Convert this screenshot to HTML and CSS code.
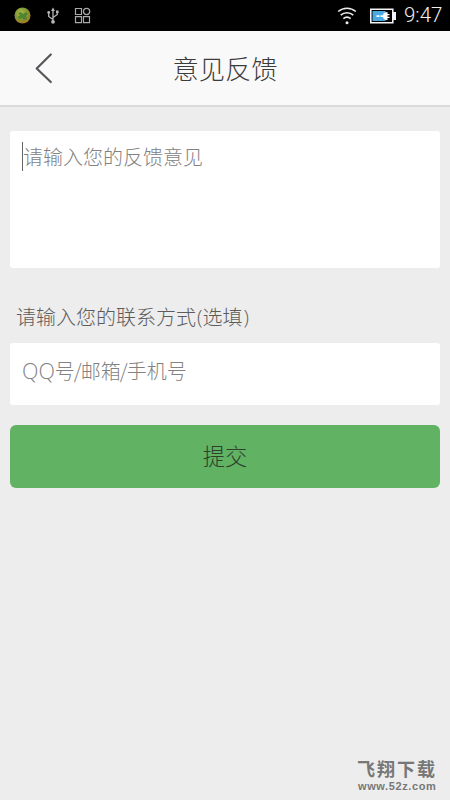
FILE: index.html
```html
<!DOCTYPE html>
<html lang="zh-CN">
<head>
<meta charset="utf-8">
<title>意见反馈</title>
<link rel="stylesheet" href="styles.css">
</head>
<body>
<div class="screen">
  <div class="status">
    <svg class="status-left" width="110" height="31" viewBox="0 0 110 31">
      <defs>
        <radialGradient id="orb" cx="40%" cy="35%" r="65%">
          <stop offset="0" stop-color="#b5bd45"/>
          <stop offset=".55" stop-color="#7f9a35"/>
          <stop offset="1" stop-color="#a47a24"/>
        </radialGradient>
      </defs>
      <circle cx="22.500" cy="15.500" r="8" fill="url(#orb)"/>
      <path d="M18 13l3-1 2 2 3-2 2 2-2 2 1 3-3 1-2-2-3 1-1-2 2-2z" fill="#4f8530"/>
      <g fill="none" stroke="#b4b4b4" stroke-width="1.300">
        <path d="M53 10v11M53 19.500l-4.300-3v-3.500M53 17.500l4.300-3v-2"/>
      </g>
      <g fill="#b4b4b4">
        <path d="M53 7.500l2 3.500h-4z"/>
        <circle cx="53" cy="21.800" r="1.900"/>
        <circle cx="48.700" cy="12.500" r="1.400"/>
        <path d="M56 10.500h2.600v2.600H56z"/>
      </g>
      <g fill="none" stroke="#a8a8a8" stroke-width="1.200">
        <path d="M75.500 8.500h6v6h-6zM75.500 16.700h6v6h-6zM83.500 16.700h6v6h-6z"/>
        <circle cx="86.600" cy="11.500" r="3.100"/>
      </g>
    </svg>
    <div class="status-right">
      <svg width="62" height="31" viewBox="0 0 62 31">
        <g fill="none" stroke="#ececec" stroke-width="1.600">
          <path d="M1.200 11.500c5-4.400 12.600-4.400 17.600 0M3.700 15.200c3.600-3.200 9-3.200 12.600 0M6.400 18.600c2.200-1.900 5-1.900 7.200 0"/>
        </g>
        <circle cx="10" cy="22.800" r="1.500" fill="#ececec"/>
        <path d="M33.800 9.300h22v13.400h-22z" fill="#000" stroke="#f4f4f4" stroke-width="1.600"/>
        <path d="M35.500 11h13v10h-13z" fill="#48a9e3"/>
        <path d="M56 12h3v8h-3z" fill="#f4f4f4"/>
        <path d="M39.500 15.200h3v1.700h-3zM43.500 15.200h2.500c0-2 2-3.200 4.500-3.200v2h2v1.300h-2v1.400h2v1.300h-2v2c-2.500 0-4.500-1.100-4.500-3.100h-2.500z" fill="#fff"/>
      </svg>
      <span class="clock">9:47</span>
    </div>
  </div>
  <header class="header">
    <svg class="back" width="20" height="34" viewBox="0 0 20 34"><path d="M16.800 3.500L2.700 17.500 16.800 31" fill="none" stroke="#55575b" stroke-width="2.200" stroke-linecap="round" stroke-linejoin="round"/></svg>
    <h1 class="title">意见反馈</h1>
  </header>
  <main class="form">
    <div class="field message"><span class="caret"></span><span class="hint">请输入您的反馈意见</span></div>
    <div class="label">请输入您的联系方式<span class="paren">(</span>选填<span class="paren">)</span></div>
    <div class="field contact"><span class="hint"><span class="latin">QQ</span>号<span class="slash">/</span>邮箱<span class="slash">/</span>手机号</span></div>
    <button class="submit">提交</button>
  </main>
  <footer class="mark">
    <div class="mark-name">飞翔下载</div>
    <div class="mark-url">www.52z.com</div>
  </footer>
</div>
</body>
</html>
```

FILE: styles.css
```css
* { box-sizing: border-box; }
body {
  margin: 0;
  font-family: "Noto Sans CJK SC", sans-serif;
  font-weight: 300;
}
.screen {
  width: 450px;
  height: 800px;
  display: flex;
  flex-direction: column;
  background: #ededed;
  overflow: hidden;
}
.status {
  height: 31px;
  flex: none;
  display: flex;
  justify-content: space-between;
  background: #000;
}
.status-right {
  display: flex;
  align-items: center;
  padding-right: 8px;
}
.clock {
  width: 38px;
  margin-left: 5px;
  color: #eee;
  font: 300 20.500px/33px Roboto, sans-serif;
  white-space: nowrap;
}
.header {
  height: 76px;
  flex: none;
  display: grid;
  grid-template-columns: 70px 1fr 70px;
  align-items: center;
  background: #f9f9f9;
  border-bottom: 2px solid #dadada;
}
.back { margin-left: 34px; }
.title {
  margin: 0;
  text-align: center;
  color: #3c3c3c;
  font-size: 26.300px;
  font-weight: 300;
  line-height: 40px;
}
.form { padding: 24px 10px 0; }
.field {
  display: flex;
  background: #fff;
  border-radius: 3px;
  padding-left: 12px;
}
.message { height: 137px; padding-top: 11px; }
.contact { height: 62px; align-items: center; padding-bottom: 8px; }
.caret { width: 1px; height: 29px; background: #666; }
.hint { color: #828282; font-size: 20px; line-height: 29px; }
.latin {
  font-family: "Open Sans", sans-serif;
  font-size: 21.500px;
  line-height: 1;
}
.slash { margin: 0 -1px; }
.paren {
  font-family: "Open Sans", sans-serif;
  padding-left: 1px;
}
.label {
  height: 75px;
  padding: 34px 0 0 6px;
  color: #5c5c5c;
  font-size: 20px;
  line-height: 29px;
}
.submit {
  display: block;
  width: 100%;
  height: 63px;
  margin-top: 20px;
  padding: 0 0 4px;
  border: 0;
  border-radius: 6px;
  background: #62b264;
  color: #2c402c;
  font: inherit;
  font-size: 22.300px;
}
.mark {
  width: 82px;
  margin: auto 11px 7px auto;
  color: #777;
}
.mark-name {
  font-size: 18px;
  font-weight: 700;
  line-height: 23px;
  letter-spacing: 2px;
  white-space: nowrap;
}
.mark-url {
  padding-left: 1px;
  font: bold 11px/13px "Liberation Sans", sans-serif;
  letter-spacing: 0.600px;
}
```
